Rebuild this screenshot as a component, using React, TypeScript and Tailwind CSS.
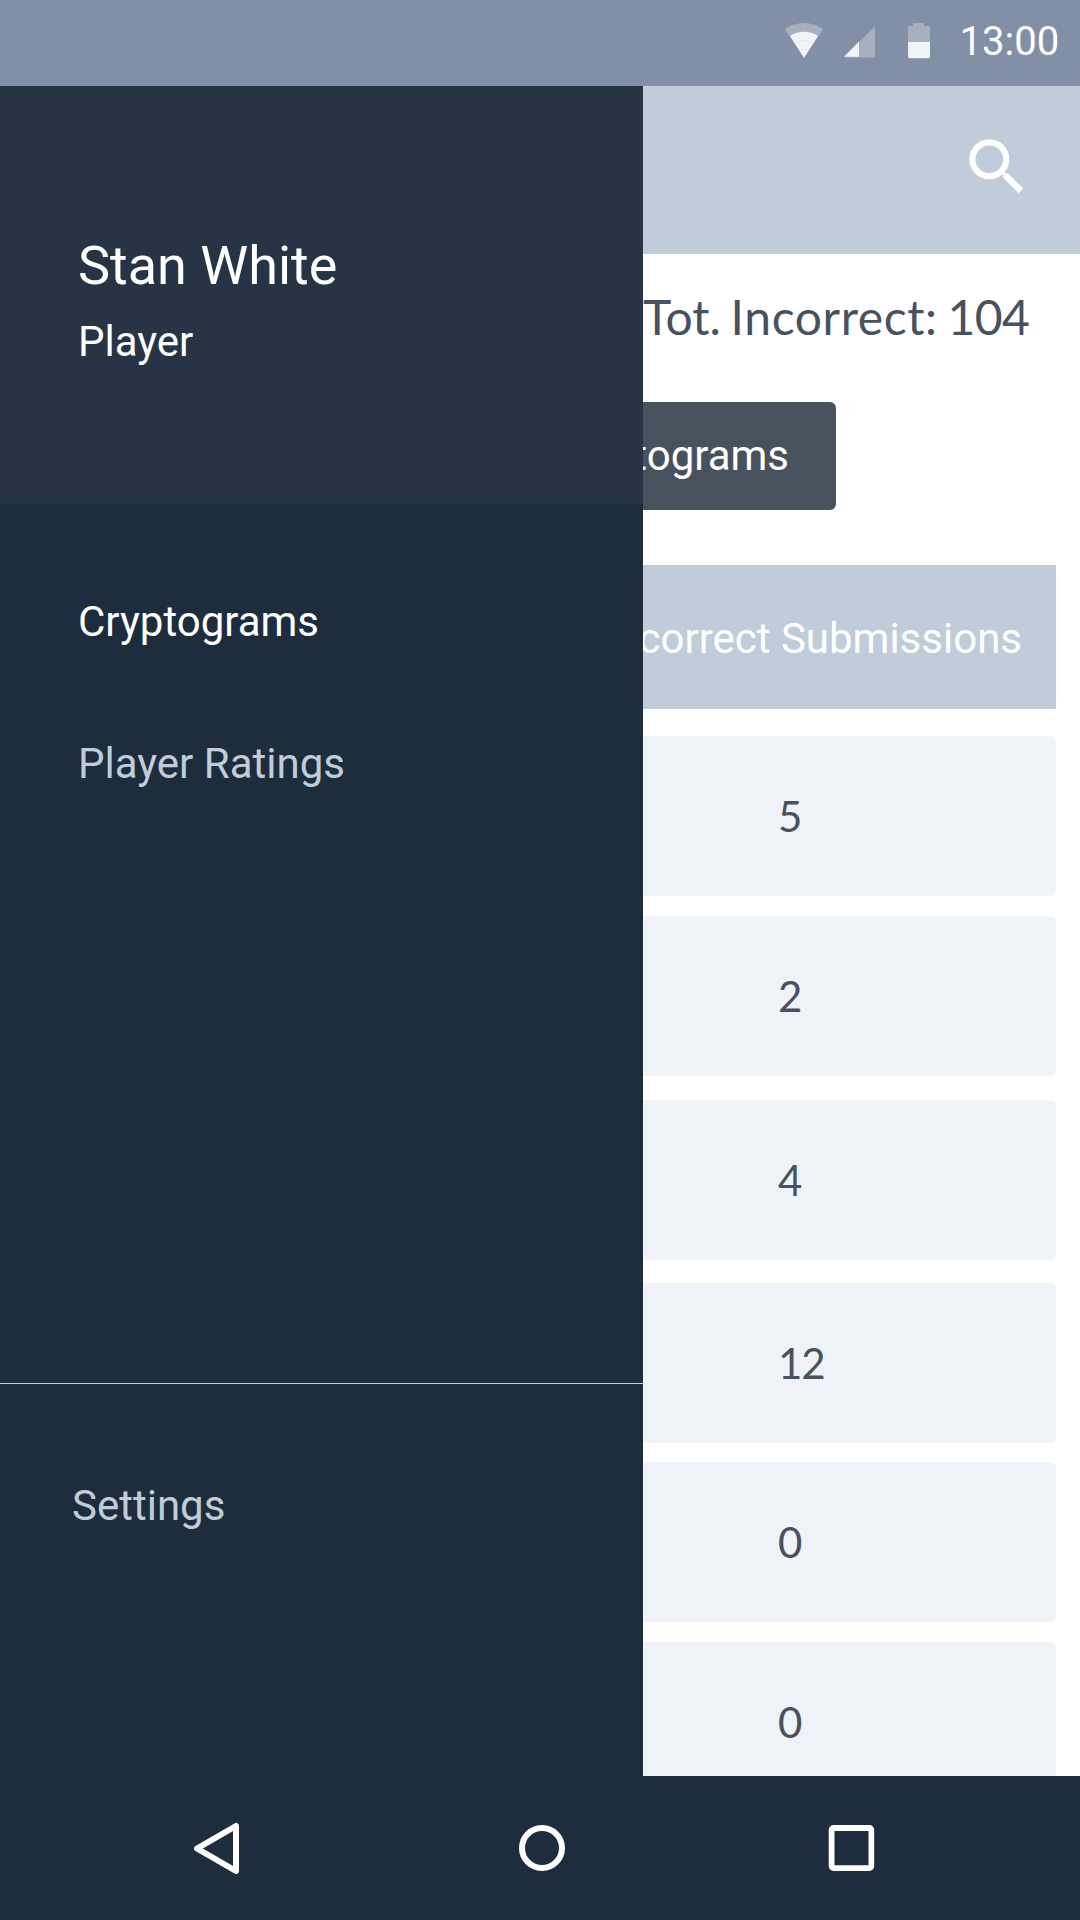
import React from "react";

const rows = [
  { value: "5", spacing: "mt-[27px]" },
  { value: "2", spacing: "mt-5" },
  { value: "4", spacing: "mt-6" },
  { value: "12", spacing: "mt-[23px]" },
  { value: "0", spacing: "mt-[19px]" },
  { value: "0", spacing: "mt-5" },
];

function WifiIcon() {
  return (
    <svg width="38" height="35" viewBox="0 0 38 35">
      <path d="M0 6.2C5.500 2 12 0 19 0s13.500 2 19 6.200L19 35Z" fill="#a7b0c0" />
      <path d="M5 13C9.200 10 14 8.800 19 8.800S28.800 10 33 13L19 35Z" fill="#f1f3f6" />
      <path d="M12.500 18.500l3-.7M17 17.500h4M22.500 17.800l3 .7M16 26.500h1.500M20.500 26.500H22" stroke="#dfe3e8" strokeWidth="1" />
    </svg>
  );
}

function SignalIcon() {
  return (
    <svg width="31" height="32" viewBox="0 0 31 32">
      <path d="M0 31.500L31 0v31.500Z" fill="#a7b0c0" />
      <path d="M0 30.700L15 15.500v15.200Z" fill="#f1f3f6" />
    </svg>
  );
}

function BatteryIcon() {
  return (
    <svg width="22" height="36" viewBox="0 0 22 36">
      <path d="M5 0h11v3h4.500A1.500 1.500 0 0 1 22 4.500V19H0V4.500A1.500 1.500 0 0 1 1.500 3H5Z" fill="#a7b0c0" />
      <path d="M0 19h22v14.500a1.800 1.800 0 0 1-1.800 1.800H1.800A1.800 1.800 0 0 1 0 33.500Z" fill="#f1f3f6" />
    </svg>
  );
}

function SearchIcon() {
  return (
    <svg width="74" height="74" viewBox="0 0 24 24" fill="#fff">
      <path d="M15.500 14h-.79l-.28-.27A6.471 6.471 0 0 0 16 9.500 6.500 6.500 0 1 0 9.500 16c1.610 0 3.090-.59 4.230-1.570l.27.28v.79l5 4.990L20.490 19l-4.990-5zm-6 0C7.010 14 5 11.990 5 9.500S7.010 5 9.500 5 14 7.010 14 9.500 11.990 14 9.500 14z" />
    </svg>
  );
}

function StatusBar() {
  return (
    <header className="flex h-[86px] shrink-0 items-start justify-end bg-[#8190a6] pr-[21.5px] text-white">
      <div className="mt-[23px] flex items-start">
        <WifiIcon />
        <div className="mt-[3px] ml-[21px]">
          <SignalIcon />
        </div>
        <div className="ml-[33px]">
          <BatteryIcon />
        </div>
      </div>
      <time className="mt-[18px] ml-[29.5px] w-[99px] text-right text-[40px] leading-[47px] whitespace-nowrap">
        13:00
      </time>
    </header>
  );
}

function Drawer() {
  return (
    <aside className="absolute top-0 left-0 flex h-full w-[643px] flex-col bg-[#1e2d3d] text-[42px] leading-[49px]">
      <div className="h-[418px] shrink-0 bg-[#273445] pt-[148px] pl-[78px] text-white">
        <h1 className="text-[54px] leading-[63px]">Stan White</h1>
        <p className="mt-5">Player</p>
      </div>
      <nav className="flex flex-1 flex-col gap-[93px] pt-[93px] pl-[78px] text-[#c0ccda]">
        <a className="text-white">Cryptograms</a>
        <a>Player Ratings</a>
      </nav>
      <div className="h-[393px] shrink-0 border-t border-[#c0ccda] pt-[97px] pl-[72px] text-[#c0ccda]">
        <a>Settings</a>
      </div>
    </aside>
  );
}

function Content() {
  return (
    <main className="flex h-full flex-col">
      <div className="flex h-[168px] shrink-0 items-start justify-end bg-[#c0ccda] pt-[44px] pr-[46px]">
        <SearchIcon />
      </div>
      <p className="mt-[34px] ml-[643px] shrink-0 font-[Lato,sans-serif] text-[48px] leading-[57px] whitespace-nowrap text-[#48525e] [word-spacing:-2.5px]">
        Tot. <span className="tracking-[0.6px]">Incorrect:</span> <span className="tracking-[-0.5px]">104</span>
      </p>
      <button className="mt-[57px] ml-[244px] flex h-[108px] w-[592px] shrink-0 justify-end rounded-[6px] bg-[#48525e] pt-[29px] pr-[47px] text-[42px] leading-[49px] text-white">
        Cryptograms
      </button>
      <div className="mx-6 mt-[55px] flex h-36 shrink-0 justify-end bg-[#c0ccda] pt-[49px] pr-[34px] text-[42px] leading-[49px] text-white">
        Incorrect Submissions
      </div>
      {rows.map((row, i) => (
        <div
          key={i}
          className={`mx-6 flex h-40 shrink-0 items-center rounded-[6px] bg-[#eff2f7] pl-[754px] font-[Lato,sans-serif] text-[42px] leading-[50px] tracking-[-1px] text-[#48525e] ${row.spacing}`}
        >
          {row.value}
        </div>
      ))}
    </main>
  );
}

function NavigationBar() {
  return (
    <footer className="flex h-36 shrink-0 items-start bg-[#1e2d3d] pl-[194px]">
      <svg className="mt-[46px]" width="46" height="54" viewBox="0 0 46 54">
        <path d="M3 26.500L42 4v45Z" fill="none" stroke="#fff" strokeWidth="6" strokeLinejoin="round" />
      </svg>
      <svg className="mt-[49px] ml-[279px]" width="46" height="46" viewBox="0 0 46 46">
        <circle cx="23" cy="23" r="20" fill="none" stroke="#fff" strokeWidth="6" />
      </svg>
      <svg className="mt-[49px] ml-[263px]" width="47" height="46" viewBox="0 0 47 46">
        <path fillRule="evenodd" fill="#fff" d="M5.700 0h35.500a5 5 0 0 1 5 5v36a5 5 0 0 1-5 5h-35.500a5 5 0 0 1-5-5V5a5 5 0 0 1 5-5Zm.8 6v34.300h34V6Z" />
      </svg>
    </footer>
  );
}

export default function App() {
  return (
    <div className="flex h-[1920px] w-[1080px] flex-col overflow-hidden bg-white font-[Roboto,sans-serif]">
      <StatusBar />
      <div className="relative h-[1690px] shrink-0 overflow-hidden">
        <Content />
        <Drawer />
      </div>
      <NavigationBar />
    </div>
  );
}
